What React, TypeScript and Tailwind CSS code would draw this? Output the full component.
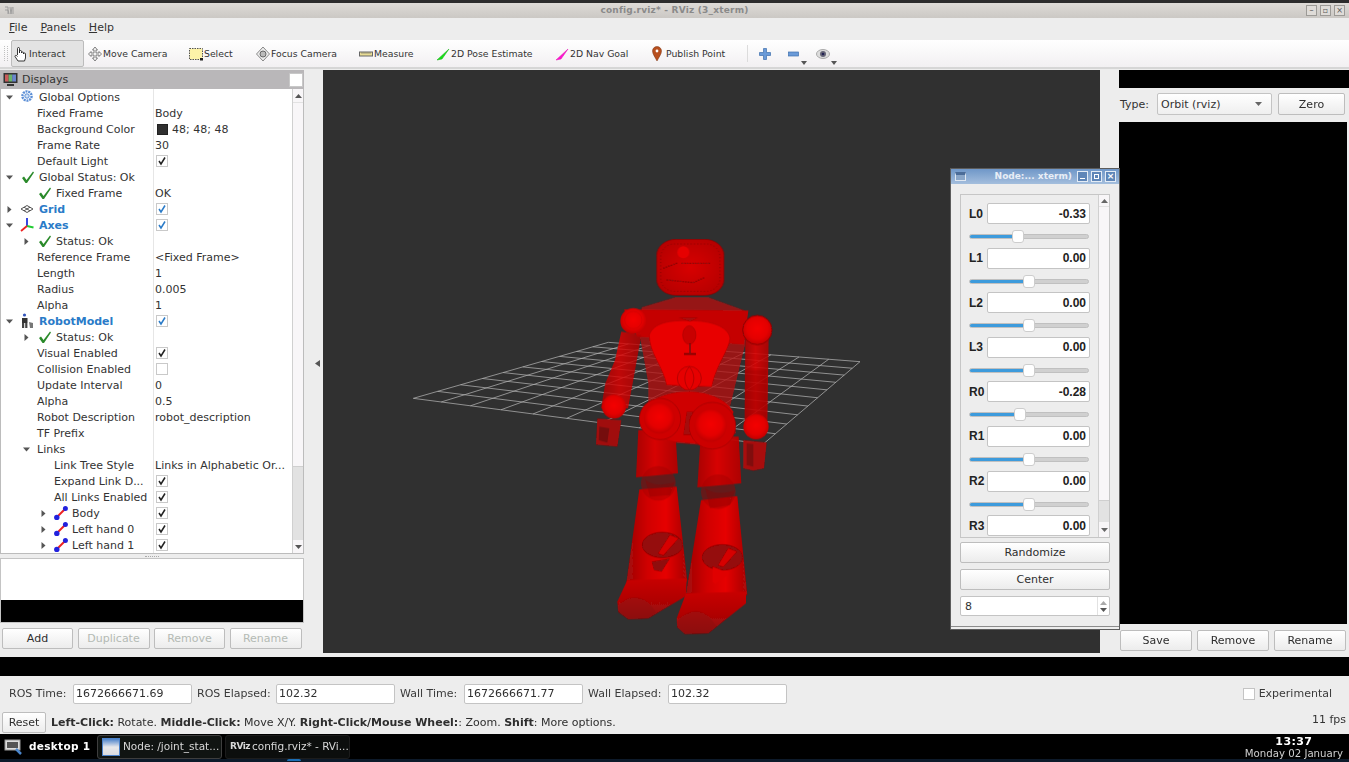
import React from "react";

const font = "font-['DejaVu_Sans',sans-serif]";

type Row = { d: number; label: string; arrow?: "down" | "right"; icon?: string; blue?: boolean; value?: string; check?: "black" | "blue" | "none"; swatch?: boolean };

const rows: Row[] = [
  { d: 0, label: "Global Options", arrow: "down", icon: "gear" },
  { d: 1, label: "Fixed Frame", value: "Body" },
  { d: 1, label: "Background Color", value: "48; 48; 48", swatch: true },
  { d: 1, label: "Frame Rate", value: "30" },
  { d: 1, label: "Default Light", check: "black" },
  { d: 0, label: "Global Status: Ok", arrow: "down", icon: "ok" },
  { d: 1, label: "Fixed Frame", icon: "ok", value: "OK" },
  { d: 0, label: "Grid", arrow: "right", icon: "grid", blue: true, check: "blue" },
  { d: 0, label: "Axes", arrow: "down", icon: "axes", blue: true, check: "blue" },
  { d: 1, label: "Status: Ok", arrow: "right", icon: "ok" },
  { d: 1, label: "Reference Frame", value: "<Fixed Frame>" },
  { d: 1, label: "Length", value: "1" },
  { d: 1, label: "Radius", value: "0.005" },
  { d: 1, label: "Alpha", value: "1" },
  { d: 0, label: "RobotModel", arrow: "down", icon: "robot", blue: true, check: "blue" },
  { d: 1, label: "Status: Ok", arrow: "right", icon: "ok" },
  { d: 1, label: "Visual Enabled", check: "black" },
  { d: 1, label: "Collision Enabled", check: "none" },
  { d: 1, label: "Update Interval", value: "0" },
  { d: 1, label: "Alpha", value: "0.5" },
  { d: 1, label: "Robot Description", value: "robot_description" },
  { d: 1, label: "TF Prefix" },
  { d: 1, label: "Links", arrow: "down" },
  { d: 2, label: "Link Tree Style", value: "Links in Alphabetic Or..." },
  { d: 2, label: "Expand Link D...", check: "black" },
  { d: 2, label: "All Links Enabled", check: "black" },
  { d: 2, label: "Body", arrow: "right", icon: "link", check: "black" },
  { d: 2, label: "Left hand 0", arrow: "right", icon: "link", check: "black" },
  { d: 2, label: "Left hand 1", arrow: "right", icon: "link", check: "black" },
];

const indent = ["w-0", "w-[17px]", "w-[34px]"];

function TreeIcon({ name }: { name?: string }) {
  if (name === "ok")
    return (
      <svg width="16" height="16" viewBox="0 0 16 16">
        <path d="M2 9 L4 7.5 L6.5 11 L13 2.5 L14 3.5 L7 14 L5.5 14 Z" fill="#2a8a2a" />
      </svg>
    );
  if (name === "gear")
    return (
      <svg width="16" height="16" viewBox="0 0 16 16">
        <circle cx="7" cy="7" r="4.6" fill="none" stroke="#5c8fd6" strokeWidth="2.4" strokeDasharray="2 0.8" />
        <circle cx="7" cy="7" r="2.2" fill="#cfe0f5" stroke="#5c8fd6" />
      </svg>
    );
  if (name === "grid")
    return (
      <svg width="16" height="16" viewBox="0 0 16 16">
        <path d="M1 8 L7 4.5 L13 8 L7 11.5 Z M4 6.2 L10 9.8 M10 6.2 L4 9.8" fill="none" stroke="#555" strokeWidth="1" />
      </svg>
    );
  if (name === "axes")
    return (
      <svg width="16" height="16" viewBox="0 0 16 16">
        <path d="M7 9 L7 1" stroke="#2233dd" strokeWidth="1.8" />
        <path d="M7 9 L13.5 10.5" stroke="#22cc33" strokeWidth="1.8" />
        <path d="M7 9 L1 14" stroke="#ee2222" strokeWidth="1.8" />
      </svg>
    );
  if (name === "robot")
    return (
      <svg width="16" height="16" viewBox="0 0 16 16">
        <circle cx="4.5" cy="2" r="1.6" fill="#3355bb" />
        <rect x="2" y="5" width="5.5" height="5" fill="#333" />
        <rect x="2" y="10" width="2.2" height="5" fill="#444" />
        <rect x="5.2" y="10" width="2.2" height="5" fill="#444" />
        <path d="M9 9 L13 10 L13 15 L10 15 Z" fill="#777" />
      </svg>
    );
  if (name === "link")
    return (
      <svg width="16" height="16" viewBox="0 0 16 16">
        <path d="M3 12 L11 4" stroke="#ee2222" strokeWidth="2" />
        <circle cx="2.8" cy="12.4" r="2.7" fill="#2222dd" />
        <circle cx="11.4" cy="3.6" r="2.5" fill="#2222dd" />
      </svg>
    );
  return null;
}

function Check({ kind }: { kind: "black" | "blue" | "none" }) {
  return (
    <div className="w-3 h-3 border border-[#c9c9c9] bg-white flex items-center justify-center">
      {kind !== "none" && (
        <svg width="10" height="10" viewBox="0 0 10 10">
          <path d="M2 5 L4 8 L8 1.5" fill="none" stroke={kind === "blue" ? "#2a7bc8" : "#222"} strokeWidth="1.5" />
        </svg>
      )}
    </div>
  );
}

function Arrow({ dir }: { dir?: "down" | "right" }) {
  if (!dir) return null;
  return dir === "down" ? (
    <svg width="7" height="5" viewBox="0 0 7 5">
      <path d="M0 0.5 H7 L3.5 4.5 Z" fill="#555" />
    </svg>
  ) : (
    <svg width="5" height="7" viewBox="0 0 5 7">
      <path d="M0.5 0 V7 L4.5 3.5 Z" fill="#555" />
    </svg>
  );
}

function TreeRow({ r }: { r: Row }) {
  return (
    <div className="flex h-4 items-center">
      <div className="w-[152px] shrink-0 flex items-center h-4 overflow-hidden">
        <div className={`${indent[r.d]} shrink-0`} />
        <div className="w-[17px] shrink-0 flex justify-center">
          <Arrow dir={r.arrow} />
        </div>
        <div className="w-[2px] shrink-0" />
        {r.icon && (
          <div className={`${r.icon === "link" ? "w-[18px]" : "w-[19px]"} shrink-0`}>
            <TreeIcon name={r.icon} />
          </div>
        )}
        <span className={r.blue ? "font-bold text-[#2a7bc8] whitespace-nowrap" : "whitespace-nowrap"}>{r.label}</span>
      </div>
      <div className="pl-[1px] flex items-center whitespace-nowrap h-4 border-l border-[#e6e6e6]">
        {r.swatch && <div className="w-[11px] h-[11px] bg-[#303030] border border-[#222] ml-[2px] mr-[4px]" />}
        {r.value}
        {r.check && <div className="ml-[1px]"><Check kind={r.check} /></div>}
      </div>
    </div>
  );
}

function Btn({ label, cls, disabled }: { label: string; cls: string; disabled?: boolean }) {
  return (
    <div
      className={`${cls} flex items-center justify-center border border-[#bdbdbd] rounded-[2px] bg-gradient-to-b from-white to-[#ececec] ${disabled ? "text-[#b4bab4]" : "text-[#2e2e2e]"}`}
    >
      {label}
    </div>
  );
}

function Field({ value, cls }: { value: string; cls: string }) {
  return <div className={`${cls} h-5 bg-white border border-[#c4c4c4] rounded-[2px] flex items-center pl-[2px] text-[#2e2e2e]`}>{value}</div>;
}

const tools = [
  { w: "w-[73px]", pl: "pl-[2px]", label: "Interact", icon: "hand", active: true },
  { w: "w-[103px]", pl: "pl-[4px]", label: "Move Camera", icon: "move" },
  { w: "w-[67px]", pl: "pl-[2px]", label: "Select", icon: "select" },
  { w: "w-[103px]", pl: "pl-[2px]", label: "Focus Camera", icon: "focus" },
  { w: "w-[77px]", pl: "pl-[2px]", label: "Measure", icon: "measure" },
  { w: "w-[119px]", pl: "pl-[2px]", label: "2D Pose Estimate", icon: "pose" },
  { w: "w-[97px]", pl: "pl-[2px]", label: "2D Nav Goal", icon: "nav" },
  { w: "w-[95px]", pl: "pl-[2px]", label: "Publish Point", icon: "pin" },
];

function ToolIcon({ name }: { name: string }) {
  const s = { width: 14, height: 16, viewBox: "0 0 14 16" };
  switch (name) {
    case "hand":
      return (
        <svg {...s}>
          <path d="M3.5 9 V2.5 a1 1 0 0 1 2 0 V7 V5.5 a1 1 0 0 1 2 0 V7 a1 1 0 0 1 2 0 V8 a1 1 0 0 1 2 0 V12 L10.5 15 H4 L1 10.5 C1 9 2.5 9 3.5 10.5" fill="#fff" stroke="#222" strokeWidth="0.9" />
        </svg>
      );
    case "move":
      return (
        <svg {...s}>
          <path d="M7 1 L9.5 4 H8 V7 H11 V5.5 L13.5 8 L11 10.5 V9 H8 V12 H9.5 L7 15 L4.5 12 H6 V9 H3 V10.5 L0.5 8 L3 5.5 V7 H6 V4 H4.5 Z" fill="#f2f2f2" stroke="#666" strokeWidth="0.8" />
        </svg>
      );
    case "select":
      return (
        <svg {...s}>
          <rect x="0.5" y="2.5" width="13" height="11" fill="#fdf3a8" stroke="#555" strokeDasharray="1.5 1" />
          <rect x="11" y="12" width="3" height="2.5" fill="#222" />
        </svg>
      );
    case "focus":
      return (
        <svg {...s}>
          <path d="M7 1 L13.5 8 L7 15 L0.5 8 Z" fill="#ececec" stroke="#888" />
          <circle cx="7" cy="8" r="3" fill="#bbb" stroke="#666" />
        </svg>
      );
    case "measure":
      return (
        <svg {...s}>
          <rect x="0.5" y="6" width="13" height="4" fill="#e8dc94" stroke="#666" />
          <path d="M3 6 V8 M5 6 V8 M7 6 V8 M9 6 V8 M11 6 V8" stroke="#666" strokeWidth="0.6" />
        </svg>
      );
    case "pose":
      return (
        <svg {...s}>
          <path d="M1 14 L13 3 L6 13 Z" fill="#16e016" stroke="#11aa11" strokeWidth="0.5" />
        </svg>
      );
    case "nav":
      return (
        <svg {...s}>
          <path d="M1 14 L13 3 L6 13 Z" fill="#ff14d0" stroke="#e010b0" strokeWidth="0.5" />
        </svg>
      );
    default:
      return (
        <svg width="10" height="16" viewBox="0 0 10 16">
          <path d="M5 15 C3 11 0.5 8 0.5 5 a4.5 4.5 0 0 1 9 0 C9.5 8 7 11 5 15 Z" fill="#b8501f" stroke="#7a3212" strokeWidth="0.5" />
          <circle cx="5" cy="5" r="1.4" fill="#fff" />
        </svg>
      );
  }
}

const sliders = [
  { n: "L0", v: "-0.33", x: 49 },
  { n: "L1", v: "0.00", x: 60 },
  { n: "L2", v: "0.00", x: 60 },
  { n: "L3", v: "0.00", x: 60 },
  { n: "R0", v: "-0.28", x: 51 },
  { n: "R1", v: "0.00", x: 60 },
  { n: "R2", v: "0.00", x: 60 },
  { n: "R3", v: "0.00", x: 60 },
];

function gridLines() {
  const P = [
    [40, 535],
    [625, 367],
    [1380, 425],
    [1090, 672],
  ];
  const w = [1, 1.28, 1, 0.78];
  const at = (u: number, v: number) => {
    const b = [(1 - u) * (1 - v) * w[0], u * (1 - v) * w[1], u * v * w[2], (1 - u) * v * w[3]];
    const t = b[0] + b[1] + b[2] + b[3];
    return [0, 1].map((i) => (b[0] * P[0][i] + b[1] * P[1][i] + b[2] * P[2][i] + b[3] * P[3][i]) / t);
  };
  const out: string[] = [];
  for (let i = 0; i <= 10; i++) {
    const a = at(i / 10, 0), b = at(i / 10, 1), c = at(0, i / 10), d = at(1, i / 10);
    out.push(`M${a[0]} ${a[1]} L${b[0]} ${b[1]}`, `M${c[0]} ${c[1]} L${d[0]} ${d[1]}`);
  }
  return out.join(" ");
}

function Robot() {
  return (
    <svg className="w-full h-full" viewBox="323 70 777 583">
      <defs>
        <radialGradient id="ball" cx="50%" cy="45%" r="55%">
          <stop offset="0%" stopColor="#f40000" />
          <stop offset="65%" stopColor="#e40000" />
          <stop offset="100%" stopColor="#c00404" />
        </radialGradient>
        <linearGradient id="limb" x1="0" y1="0" x2="1" y2="0">
          <stop offset="0%" stopColor="#b00707" />
          <stop offset="45%" stopColor="#e00000" />
          <stop offset="100%" stopColor="#b40707" />
        </linearGradient>
        <linearGradient id="shin" x1="0" y1="0" x2="1" y2="0">
          <stop offset="0%" stopColor="#9c0a0a" />
          <stop offset="35%" stopColor="#d00000" />
          <stop offset="65%" stopColor="#e60000" />
          <stop offset="100%" stopColor="#a60808" />
        </linearGradient>
        <linearGradient id="foot" x1="0" y1="0" x2="0" y2="1">
          <stop offset="0%" stopColor="#c80303" />
          <stop offset="55%" stopColor="#b00606" />
          <stop offset="100%" stopColor="#8c0b0b" />
        </linearGradient>
        <radialGradient id="head" cx="50%" cy="50%" r="60%">
          <stop offset="0%" stopColor="#d80202" />
          <stop offset="100%" stopColor="#b40606" />
        </radialGradient>
        <filter id="soft" x="-5%" y="-5%" width="110%" height="110%">
          <feGaussianBlur stdDeviation="1.6" />
        </filter>
      </defs>
      <g transform="translate(400 220) scale(0.33333)">
        <path d={gridLines()} stroke="#b4b4b4" strokeWidth="2.2" fill="none" />
        <g filter="url(#soft)">
          {/* back torso & shoulder yoke */}
          <path d="M725 262 L825 232 L925 232 L1035 272 L1035 375 L990 560 L1008 640 L905 675 L820 668 L745 640 L745 490 L720 350 Z" fill="#b41010" opacity="0.78" />
          <path d="M672 268 L1045 272 L1032 374 L712 350 Z" fill="#c80404" opacity="0.95" />
          {/* left arm */}
          <path d="M664 335 L724 345 L698 490 L684 565 L603 565 L616 490 L645 420 Z" fill="url(#limb)" opacity="0.82" />
          <circle cx="642" cy="560" r="36" fill="url(#ball)" />
          <path d="M592 596 L664 600 L652 680 L588 674 Z" fill="#a00b0b" />
          <path d="M598 620 L628 625 L622 668 L596 660 Z" fill="#740b0b" />
          <circle cx="700" cy="303" r="39" fill="url(#ball)" />
          <circle cx="700" cy="300" r="26" fill="none" stroke="#b80505" strokeWidth="1.5" opacity="0.6" />
          {/* right arm */}
          <path d="M1036 350 L1106 350 L1102 620 L1034 620 Z" fill="url(#limb)" opacity="0.88" />
          <path d="M1034 450 L1100 450 L1100 600 L1034 600 Z" fill="#9c0a0a" opacity="0.35" />
          <circle cx="1068" cy="620" r="38" fill="url(#ball)" />
          <path d="M1030 660 L1100 668 L1092 745 L1060 752 L1030 745 Z" fill="#a80b0b" />
          <path d="M1040 670 L1060 672 L1060 740 L1040 735 Z" fill="#800b0b" />
          <circle cx="1072" cy="330" r="44" fill="url(#ball)" stroke="#8b0808" strokeWidth="3" />
          {/* chest */}
          <path d="M748 345 C760 308 810 300 870 302 C930 302 985 318 990 355 C985 395 950 430 935 500 L800 495 C790 440 748 400 748 345 Z" fill="#e80000" stroke="#b40505" strokeWidth="2" />
          <path d="M835 292 H895 L870 305 Z" fill="#a80808" />
          <ellipse cx="868" cy="345" rx="20" ry="28" fill="#c80303" stroke="#880808" />
          <path d="M870 370 V400 M852 402 H888" stroke="#7e0909" strokeWidth="5" />
          <circle cx="868" cy="475" r="36" fill="#e60000" stroke="#a00707" strokeWidth="2" />
          <path d="M868 440 C850 460 850 490 868 510 M868 440 C886 460 886 490 868 510" stroke="#a00707" fill="none" strokeWidth="2" />
          {/* thighs */}
          <path d="M715 630 L826 630 L834 760 L708 772 Z" fill="url(#limb)" opacity="0.95" />
          <path d="M902 650 L1016 650 L1024 790 L892 802 Z" fill="url(#limb)" opacity="0.95" />
          {/* pelvis */}
          <path d="M735 560 C790 500 950 495 1000 575 L990 650 L905 672 L825 665 L740 640 Z" fill="#cf0303" />
          <path d="M860 575 L892 575 L892 645 L850 645 Z" fill="#a40808" />
          {/* hip balls */}
          <circle cx="780" cy="597" r="62" fill="#cf0303" stroke="#a00707" strokeWidth="2" />
          <circle cx="778" cy="595" r="46" fill="url(#ball)" />
          <circle cx="937" cy="617" r="70" fill="#cc0303" stroke="#a00707" strokeWidth="2" />
          <circle cx="932" cy="617" r="48" fill="url(#ball)" />
          {/* shins */}
          <path d="M718 808 L830 800 L862 1085 L678 1095 Z" fill="url(#shin)" />
          <path d="M903 840 L1012 828 L1042 1125 L856 1135 Z" fill="url(#shin)" />
          {/* knees */}
          <circle cx="775" cy="790" r="52" fill="#a40909" opacity="0.45" />
          <circle cx="955" cy="815" r="52" fill="#a40909" opacity="0.45" />
          <path d="M735 778 C760 800 800 795 825 785 L810 825 L750 830 Z" fill="#8a0b0b" opacity="0.35" />
          <path d="M915 803 C940 825 980 820 1005 810 L990 855 L930 865 Z" fill="#8a0b0b" opacity="0.35" />
          {/* ankles */}
          <ellipse cx="787" cy="975" rx="60" ry="38" fill="#950808" stroke="#7a0909" strokeWidth="2" />
          <path d="M775 1000 L810 945 L835 955 L790 1005 Z" fill="#d60101" />
          <path d="M755 1025 L810 1015 L785 1055 L762 1050 Z" fill="#8f0909" />
          <ellipse cx="967" cy="1012" rx="60" ry="38" fill="#950808" stroke="#7a0909" strokeWidth="2" />
          <path d="M955 1035 L985 985 L1010 995 L970 1040 Z" fill="#d60101" />
          <path d="M938 1040 L990 1060 L945 1092 L938 1085 Z" fill="#e00000" />
          {/* feet */}
          <path d="M682 1080 L860 1075 L858 1128 L745 1195 L685 1198 L655 1175 L652 1145 Z" fill="url(#foot)" />
          <path d="M652 1160 C690 1115 740 1125 770 1180 L745 1195 L685 1198 L655 1178 Z" fill="#8e0a0a" opacity="0.5" />
          <path d="M858 1120 L1038 1115 L1038 1150 L925 1240 L855 1242 L832 1222 L830 1195 Z" fill="url(#foot)" />
          <path d="M830 1205 C870 1160 915 1160 950 1220 L925 1240 L855 1242 L832 1222 Z" fill="#8e0a0a" opacity="0.5" />
          {/* head */}
          <rect x="770" y="58" width="202" height="168" rx="58" ry="48" fill="url(#head)" stroke="#8a0909" strokeWidth="2" />
          <rect x="782" y="72" width="178" height="142" rx="40" fill="none" stroke="#8a0909" strokeDasharray="3 7" strokeWidth="3" />
          <circle cx="850" cy="97" r="18" fill="#e60000" />
          <path d="M790 145 L835 128 M845 130 H930 M800 180 L880 188 L915 172" stroke="#7c0a0a" strokeWidth="4" strokeDasharray="4 4" fill="none" />
        </g>
      </g>
    </svg>
  );
}

function WinBtn({ children }: { children: React.ReactNode }) {
  return <div className="w-[11px] h-[11px] border border-[#e4ecf5] bg-[#5f86b8] flex items-center justify-center text-white">{children}</div>;
}

export default function App() {
  return (
    <div className={`relative w-[1349px] h-[762px] overflow-hidden bg-[#ededed] text-[11px] leading-none text-[#333] ${font}`}>
      {/* top strip */}
      <div className="h-[3px] bg-[#2c2c2c]" />
      {/* title bar */}
      <div className="h-[15px] bg-gradient-to-b from-[#dedbd7] to-[#cbc8c4] flex items-center relative">
        <svg className="ml-[4px]" width="11" height="9" viewBox="0 0 11 9">
          <path d="M1 1 H4 V8 M1 4 H4 L5 8 M6 1 L7 8 L8 1 M9 1 V8" stroke="#999" fill="none" strokeWidth="0.9" />
        </svg>
        <div className="flex-1 text-center font-bold text-[9px] text-[#8a8a8a] tracking-[0.2px] pl-[28px]">config.rviz* - RViz (3_xterm)</div>
        <div className="flex gap-[3px] mr-[4px]">
          {["–", "▫", "×"].map((g) => (
            <div key={g} className="w-[11px] h-[11px] border border-[#9c9a96] bg-[#dfdcd8] flex items-center justify-center text-[8px] text-[#555]">
              {g}
            </div>
          ))}
        </div>
      </div>
      {/* menu bar */}
      <div className="h-[18px] flex items-center text-[11px] pl-[9px] pt-[1px] gap-[13px] text-[#333]">
        <span><u>F</u>ile</span>
        <span><u>P</u>anels</span>
        <span><u>H</u>elp</span>
      </div>
      <div className="h-[4px]" />
      {/* toolbar */}
      <div className="h-[29px] bg-gradient-to-b from-white to-[#f2f0f2] border-b-2 border-[#d6d6d6] flex items-stretch pl-[4px]">
        <div className="w-[4px] mr-[3px] my-[6px] border-x border-dotted border-[#c0c0c0]" />
        {tools.map((t) => (
          <div key={t.label} className={`${t.w} ${t.pl} flex items-center gap-[1px] whitespace-nowrap text-[9.3px] ${t.active ? "bg-[#e3e3e3] border border-[#bcbcbc] rounded-[2px]" : ""}`}>
            <ToolIcon name={t.icon} />
            <span className={t.icon === "pin" ? "ml-[3px]" : ""}>{t.label}</span>
          </div>
        ))}
        <div className="w-px bg-[#dcdcdc] my-[5px] mr-[11px] ml-[2px]" />
        <svg className="self-center" width="12" height="12" viewBox="0 0 12 12">
          <path d="M4.5 0.5 H7.5 V4.5 H11.5 V7.5 H7.5 V11.5 H4.5 V7.5 H0.5 V4.5 H4.5 Z" fill="#6a9ad8" stroke="#3e6fae" strokeWidth="0.7" />
        </svg>
        <svg className="self-center ml-[17px]" width="11" height="6" viewBox="0 0 11 6">
          <rect x="0.5" y="1" width="10" height="4" fill="#6a9ad8" stroke="#3e6fae" strokeWidth="0.7" />
        </svg>
        <svg className="self-end mb-[2px] ml-[2px]" width="6" height="4" viewBox="0 0 6 4">
          <path d="M0 0 H6 L3 4 Z" fill="#555" />
        </svg>
        <svg className="self-center ml-[9px]" width="14" height="12" viewBox="0 0 14 12">
          <ellipse cx="7" cy="6" rx="6.5" ry="4.5" fill="#ddd" stroke="#aaa" />
          <circle cx="7" cy="6" r="3" fill="#667" />
          <circle cx="7" cy="6" r="1.3" fill="#225" />
        </svg>
        <svg className="self-end mb-[2px] ml-[1px]" width="6" height="4" viewBox="0 0 6 4">
          <path d="M0 0 H6 L3 4 Z" fill="#555" />
        </svg>
      </div>

      {/* main */}
      <div className="h-[588px] flex">
        {/* left */}
        <div className="w-[304px] shrink-0 flex flex-col">
          <div className="mt-px h-[19px] bg-[#b9b7b9] flex items-center pl-[3px]">
            <svg width="15" height="15" viewBox="0 0 15 15">
              <rect x="0.5" y="1" width="14" height="10" fill="#333" />
              <rect x="2" y="2.5" width="3.6" height="7" fill="#c95a5a" />
              <rect x="5.6" y="2.5" width="3.6" height="7" fill="#6bb36b" />
              <rect x="9.2" y="2.5" width="3.8" height="7" fill="#6a86cc" />
              <rect x="4" y="12" width="7" height="2" fill="#333" />
            </svg>
            <span className="ml-[4px] text-[11px]">Displays</span>
            <div className="ml-auto mr-[1px] w-[14px] h-[14px] bg-white border border-[#c8c8c8] rounded-[1px]" />
          </div>
          <div className="h-[465px] flex bg-white border-x border-b border-[#bcbcbc] overflow-hidden">
            <div className="w-[291px] shrink-0 h-[464px] overflow-hidden">
              {rows.map((r, i) => (
                <TreeRow key={i} r={r} />
              ))}
            </div>
            <div className="flex-1 flex flex-col border-l border-[#d0d0d0] bg-[#f8f6f8]">
              <div className="h-[14px] flex items-center justify-center border-b border-[#e2e2e2]">
                <svg width="7" height="4" viewBox="0 0 7 4"><path d="M0 4 H7 L3.5 0 Z" fill="#555" /></svg>
              </div>
              <div className="h-[363px]" />
              <div className="flex-1 bg-[#e2e2e2] border-t border-[#cfcfcf]" />
              <div className="h-[13px] flex items-center justify-center bg-[#f8f6f8]">
                <svg width="7" height="4" viewBox="0 0 7 4"><path d="M0 0 H7 L3.5 4 Z" fill="#555" /></svg>
              </div>
            </div>
          </div>
          <div className="h-[4px] flex justify-center items-center">
            <div className="w-[14px] border-t border-dotted border-[#aaa]" />
          </div>
          <div className="h-[65px] border border-[#c4c4c4] flex flex-col">
            <div className="flex-1 bg-white" />
            <div className="h-[22px] bg-black" />
          </div>
          <div className="mt-[5px] flex pl-[2px] gap-[4.5px]">
            <Btn label="Add" cls="w-[71px] h-[21px]" />
            <Btn label="Duplicate" cls="w-[72px] h-[21px]" disabled />
            <Btn label="Remove" cls="w-[71px] h-[21px]" disabled />
            <Btn label="Rename" cls="w-[72px] h-[21px]" disabled />
          </div>
        </div>
        {/* splitter */}
        <div className="w-[19px] flex items-center justify-center pl-[7px]">
          <svg width="5" height="7" viewBox="0 0 5 7"><path d="M5 0 V7 L0 3.5 Z" fill="#555" /></svg>
        </div>
        {/* viewport */}
        <div className="w-[777px] mt-px h-[583px] bg-[#303030] shrink-0">
          <Robot />
        </div>
        <div className="w-[19px]" />
        {/* right */}
        <div className="w-[230px] flex flex-col">
          <div className="mt-px h-[18px] bg-black" />
          <div className="h-[34px] flex items-center pl-[1px] pb-[2px]">
            <span className="w-[37px]">Type:</span>
            <div className="w-[115px] h-[22px] border border-[#c4c4c4] rounded-[2px] bg-gradient-to-b from-white to-[#efefef] flex items-center justify-between pl-[3px] pr-[9px]">
              Orbit (rviz)
              <svg width="7" height="4" viewBox="0 0 7 4"><path d="M0 0 H7 L3.5 4 Z" fill="#666" /></svg>
            </div>
            <Btn label="Zero" cls="ml-[6px] w-[67px] h-[22px]" />
          </div>
          <div className="h-[502px] mr-[2px] bg-black" />
          <div className="mt-[6px] flex pl-[1px] gap-[5px]">
            <Btn label="Save" cls="w-[72px] h-[21px]" />
            <Btn label="Remove" cls="w-[72px] h-[21px]" />
            <Btn label="Rename" cls="w-[72px] h-[21px]" />
          </div>
        </div>
      </div>

      {/* black strip */}
      <div className="h-[19px] bg-black" />
      {/* time bar */}
      <div className="h-[34px] flex items-center pl-[9px] pr-[17px] pt-[1px] text-[#3a3a3a]">
        <span className="w-[64px]">ROS Time:</span>
        <Field value="1672666671.69" cls="w-[119px]" />
        <span className="ml-[5px] w-[79px]">ROS Elapsed:</span>
        <Field value="102.32" cls="w-[119px]" />
        <span className="ml-[5px] w-[64px]">Wall Time:</span>
        <Field value="1672666671.77" cls="w-[119px]" />
        <span className="ml-[5px] w-[80px]">Wall Elapsed:</span>
        <Field value="102.32" cls="w-[119px]" />
        <div className="ml-auto flex items-center gap-[4px]">
          <div className="w-3 h-3 border border-[#c4c4c4] bg-white" />
          <span>Experimental</span>
        </div>
      </div>
      {/* hint bar */}
      <div className="h-[24px] flex items-center pl-[2px] pr-[3px] pt-[1px]">
        <Btn label="Reset" cls="w-[44px] h-[21px]" />
        <div className="ml-[5px] text-[#2e2e2e] whitespace-nowrap">
          <b>Left-Click:</b> Rotate. <b>Middle-Click:</b> Move X/Y. <b>Right-Click/Mouse Wheel:</b>: Zoom. <b>Shift</b>: More options.
        </div>
        <span className="ml-auto -mt-[6px]">11 fps</span>
      </div>
      {/* taskbar */}
      <div className="relative h-[28px] bg-black text-white">
        <div className="h-[25px] flex items-center pl-[4px]">
          <svg width="19" height="17" viewBox="0 0 19 17">
            <rect x="1" y="2" width="15" height="10" fill="#ddd" stroke="#999" />
            <rect x="3" y="4" width="11" height="6" fill="#555" />
            <path d="M12 11 L17 16" stroke="#4b86cc" strokeWidth="2.5" />
          </svg>
          <span className="ml-[6px] font-bold text-[10.5px] tracking-[0.3px] w-[68px] whitespace-nowrap">desktop 1</span>
          <div className="w-[125px] h-[24px] border border-[#3e3e3e] rounded-[3px] bg-[#101412] flex items-center pl-[4px] text-[10.5px] text-[#d8d8d8] whitespace-nowrap">
            <div className="w-[18px] h-[18px] bg-gradient-to-b from-[#4c82c9] via-[#e8e8ea] to-[#dcdce0] border border-[#4c82c9]" />
            <span className="ml-[3px]">Node: /joint_stat...</span>
          </div>
          <div className="ml-[3px] w-[125px] h-[24px] rounded-[3px] border border-[#1c1c1c] bg-[#0c0e0d] flex items-center pl-[4px] text-[10.5px] text-[#d8d8d8] whitespace-nowrap">
            <span className="font-bold text-[9px] tracking-[-0.5px] w-[22px]">RViz</span>
            <span>config.rviz* - RVi...</span>
          </div>
          <div className="ml-auto mr-[6px] flex flex-col items-center mt-[3px]">
            <span className="font-bold tracking-[0.4px]">13:37</span>
            <span className="mt-[2px] text-[#d0d0d0] text-[10.2px]">Monday 02 January</span>
          </div>
        </div>
        <div className="h-[3px] bg-[#0d1a2a] flex justify-start">
          <div className="ml-[287px] w-[14px] h-[2px] bg-[#1c6fb5] rounded-t-full" />
        </div>
      </div>

      {/* floating window */}
      <div className="absolute left-[950px] top-[168px] w-[170px] h-[462px] bg-[#ededed] border border-[#5c5c5c] flex flex-col">
        <div className="h-[15px] bg-gradient-to-b from-[#6f97c8] to-[#a4bedd] flex items-center pl-[4px] pr-[3px] text-white text-[9px] font-bold">
          <div className="w-[11px] h-[9px] border border-[#dfe7f1] bg-[#8aa6c8] border-t-[3px] border-t-[#4b6c98]" />
          <span className="ml-auto text-[#e8eef6] whitespace-nowrap">Node:... xterm)</span>
          <div className="flex gap-[3px] ml-[5px]">
            <WinBtn><div className="w-[5px] h-px bg-white mt-[3px]" /></WinBtn>
            <WinBtn><div className="w-[5px] h-[5px] border border-white" /></WinBtn>
            <WinBtn><span className="text-[9px] leading-none">×</span></WinBtn>
          </div>
        </div>
        <div className="pl-[9px] pr-[9px] pt-[10px] flex-1 flex flex-col">
          <div className="h-[344px] border border-[#c6c6c6] flex overflow-hidden">
            <div className="w-[137px] shrink-0 pl-[8px] pt-[8px] font-['Liberation_Sans',sans-serif] overflow-hidden">
              {sliders.map((s) => (
                <div key={s.n} className="h-[44.6px] shrink-0">
                  <div className="flex items-center h-[21px]">
                    <span className="w-[18px] font-bold text-[12px] text-[#222]">{s.n}</span>
                    <div className="w-[103px] h-[21px] bg-white border border-[#c4c4c4] rounded-[2px] flex items-center justify-end pr-[3px] font-bold text-[12px] text-[#222]">{s.v}</div>
                  </div>
                  <div className="relative h-[5px] w-[120px] mt-[10px] bg-[#d0d0d0] border border-[#c0c0c0] rounded-full">
                    <div className="h-full bg-[#3d9bdc] rounded-full" style={{ width: s.x }} />
                    <div className="absolute -top-[5px] w-[12px] h-[13px] bg-white border border-[#cdcdcd] rounded-[3px]" style={{ left: s.x - 7 }} />
                  </div>
                </div>
              ))}
            </div>
            <div className="flex-1 border-l border-[#d0d0d0] bg-[#f8f6f8] flex flex-col">
              <div className="h-[12px] flex items-center justify-center border-b border-[#e2e2e2]">
                <svg width="7" height="4" viewBox="0 0 7 4"><path d="M0 4 H7 L3.5 0 Z" fill="#666" /></svg>
              </div>
              <div className="h-[293px]" />
              <div className="h-[22px] bg-[#e2e2e2] border-t border-[#cfcfcf]" />
              <div className="flex-1 flex items-center justify-center">
                <svg width="7" height="4" viewBox="0 0 7 4"><path d="M0 0 H7 L3.5 4 Z" fill="#666" /></svg>
              </div>
            </div>
          </div>
          <Btn label="Randomize" cls="mt-[4px] h-[21px]" />
          <Btn label="Center" cls="mt-[6px] h-[21px]" />
          <div className="mt-[6px] h-[20px] bg-white border border-[#c4c4c4] rounded-[2px] flex items-center pl-[4px] justify-between">
            8
            <div className="w-[12px] h-full border-l border-[#e2e2e2] flex flex-col items-center justify-center gap-[3px]">
              <svg width="7" height="4" viewBox="0 0 7 4"><path d="M0 4 H7 L3.5 0 Z" fill="#aaa" /></svg>
              <svg width="7" height="4" viewBox="0 0 7 4"><path d="M0 0 H7 L3.5 4 Z" fill="#555" /></svg>
            </div>
          </div>
          <div className="mt-auto h-[3px] border-t border-[#8c8c8c] -mx-[9px] mb-0" />
        </div>
      </div>
    </div>
  );
}
